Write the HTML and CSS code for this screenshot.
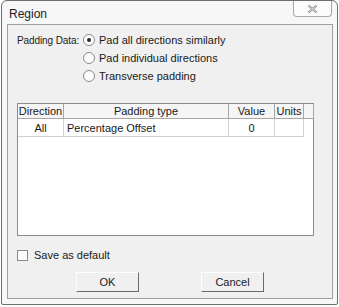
FILE: index.html
```html
<!DOCTYPE html>
<html lang="en">
<head>
  <meta charset="UTF-8" />
  <title>Region</title>
  <link rel="stylesheet" href="styles.css">
</head>
<body>

  <div class="window">
    <div class="titlebar">
      <span class="title">Region</span>
      <button class="close-btn" title="Close">
        <svg width="11" height="10" viewBox="0 0 11 10">
          <path d="M1.5 1.5 L9.5 8.5 M9.5 1.5 L1.5 8.5" stroke="#8a8a8a" stroke-width="2.2" fill="none"/>
          <path d="M1.5 1.5 L9.5 8.5 M9.5 1.5 L1.5 8.5" stroke="#f4f4f4" stroke-width="0.8" fill="none"/>
        </svg>
      </button>
    </div>

    <div class="client">
      <div class="padding-data">
        <span class="field-label">Padding Data:</span>
        <label class="radio-row"><span class="radio checked"></span>Pad all directions similarly</label>
        <label class="radio-row"><span class="radio"></span>Pad individual directions</label>
        <label class="radio-row"><span class="radio"></span>Transverse padding</label>
      </div>

      <div class="grid-box">
        <table class="grid">
          <thead>
            <tr>
              <th class="col-dir">Direction</th>
              <th class="col-type">Padding type</th>
              <th class="col-val">Value</th>
              <th class="col-units">Units</th>
              <th class="col-filler"></th>
            </tr>
          </thead>
          <tbody>
            <tr>
              <td class="center">All</td>
              <td>Percentage Offset</td>
              <td class="center">0</td>
              <td></td>
              <td class="filler"></td>
            </tr>
          </tbody>
        </table>
      </div>

      <label class="check-row"><span class="checkbox"></span>Save as default</label>

      <div class="buttons">
        <button class="btn">OK</button>
        <button class="btn">Cancel</button>
      </div>
    </div>
  </div>

</body>
</html>
```

FILE: styles.css
```css
body {
  margin: 0;
  background: #ffffff;
  font-family: "Liberation Sans", Arial, sans-serif;
  font-size: 11px;
  color: #1a1a1a;
}

.window {
  width: 337px;
  height: 305px;
  box-sizing: border-box;
  margin-left: 1px;
  border: 1px solid #6e6e6e;
  border-radius: 6px 6px 2px 2px;
  background: #f7f7f7;
  display: flex;
  flex-direction: column;
}

.titlebar {
  height: 23px;
  display: flex;
  align-items: flex-start;
  padding-left: 7px;
}

.title {
  font-size: 12px;
  margin-top: 6px;
  color: #222;
}

.close-btn {
  margin-left: auto;
  margin-right: 5px;
  width: 39px;
  height: 16px;
  padding: 0;
  border: 1px solid #a8a8a8;
  border-top: none;
  border-radius: 0 0 4px 4px;
  background: #fbfbfb;
  display: flex;
  align-items: center;
  justify-content: center;
}

.client {
  flex: 1;
  margin: 0 4px 5px 5px;
  border: 1px solid #a0a0a0;
  background: #f0f0f0;
  padding: 6px 0 0 9px;
  display: flex;
  flex-direction: column;
}

.padding-data {
  display: grid;
  grid-template-columns: 66px auto;
  grid-auto-rows: 18px;
  align-items: center;
}

.field-label {
  grid-row: 1;
  grid-column: 1;
  white-space: nowrap;
  font-size: 10px;
  letter-spacing: -0.1px;
}

.radio-row {
  grid-column: 2;
  display: flex;
  align-items: center;
  white-space: nowrap;
}

.radio {
  width: 10px;
  height: 10px;
  border: 1px solid #8b8b8b;
  border-radius: 50%;
  background: #fdfdfd;
  margin-right: 4px;
  box-sizing: content-box;
  position: relative;
}

.radio.checked::after {
  content: "";
  position: absolute;
  left: 3px;
  top: 3px;
  width: 4px;
  height: 4px;
  border-radius: 50%;
  background: #2a2a2a;
}

.grid-box {
  margin-top: 18px;
  width: 297px;
  height: 133px;
  box-sizing: border-box;
  border: 1px solid #8c8c8c;
  background: #ffffff;
}

.grid {
  border-collapse: collapse;
  table-layout: fixed;
  width: 295px;
}

.grid th {
  height: 14px;
  font-weight: normal;
  border: 1px solid #a6a6a6;
  border-top: none;
  padding: 0;
  text-align: center;
  background: #f5f5f5;
}

.grid th:first-child,
.grid td:first-child {
  border-left: none;
}

.grid td {
  height: 17px;
  padding: 0 0 0 3px;
  border-right: 1px solid #d0d0d0;
  border-bottom: 1px solid #d0d0d0;
}

.grid td.center {
  text-align: center;
  padding: 0;
}

.grid td.filler {
  border: none;
}

.col-dir { width: 45px; }
.col-type { width: 164px; }
.col-val { width: 45px; }
.col-units { width: 28px; }
.col-filler { width: 9px; }

.check-row {
  margin-top: 13px;
  display: flex;
  align-items: center;
}

.checkbox {
  width: 9px;
  height: 9px;
  border: 1px solid #8b8b8b;
  background: #fdfdfd;
  margin-right: 6px;
}

.buttons {
  margin-top: 11px;
  display: flex;
  gap: 62px;
  padding-left: 59px;
}

.btn {
  width: 63px;
  height: 20px;
  padding: 0;
  font-family: "Liberation Sans", Arial, sans-serif;
  font-size: 11px;
  color: #1a1a1a;
  background: #f0f0f0;
  border: 1px solid;
  border-color: #fdfdfd #6a6a6a #6a6a6a #fdfdfd;
}
```
